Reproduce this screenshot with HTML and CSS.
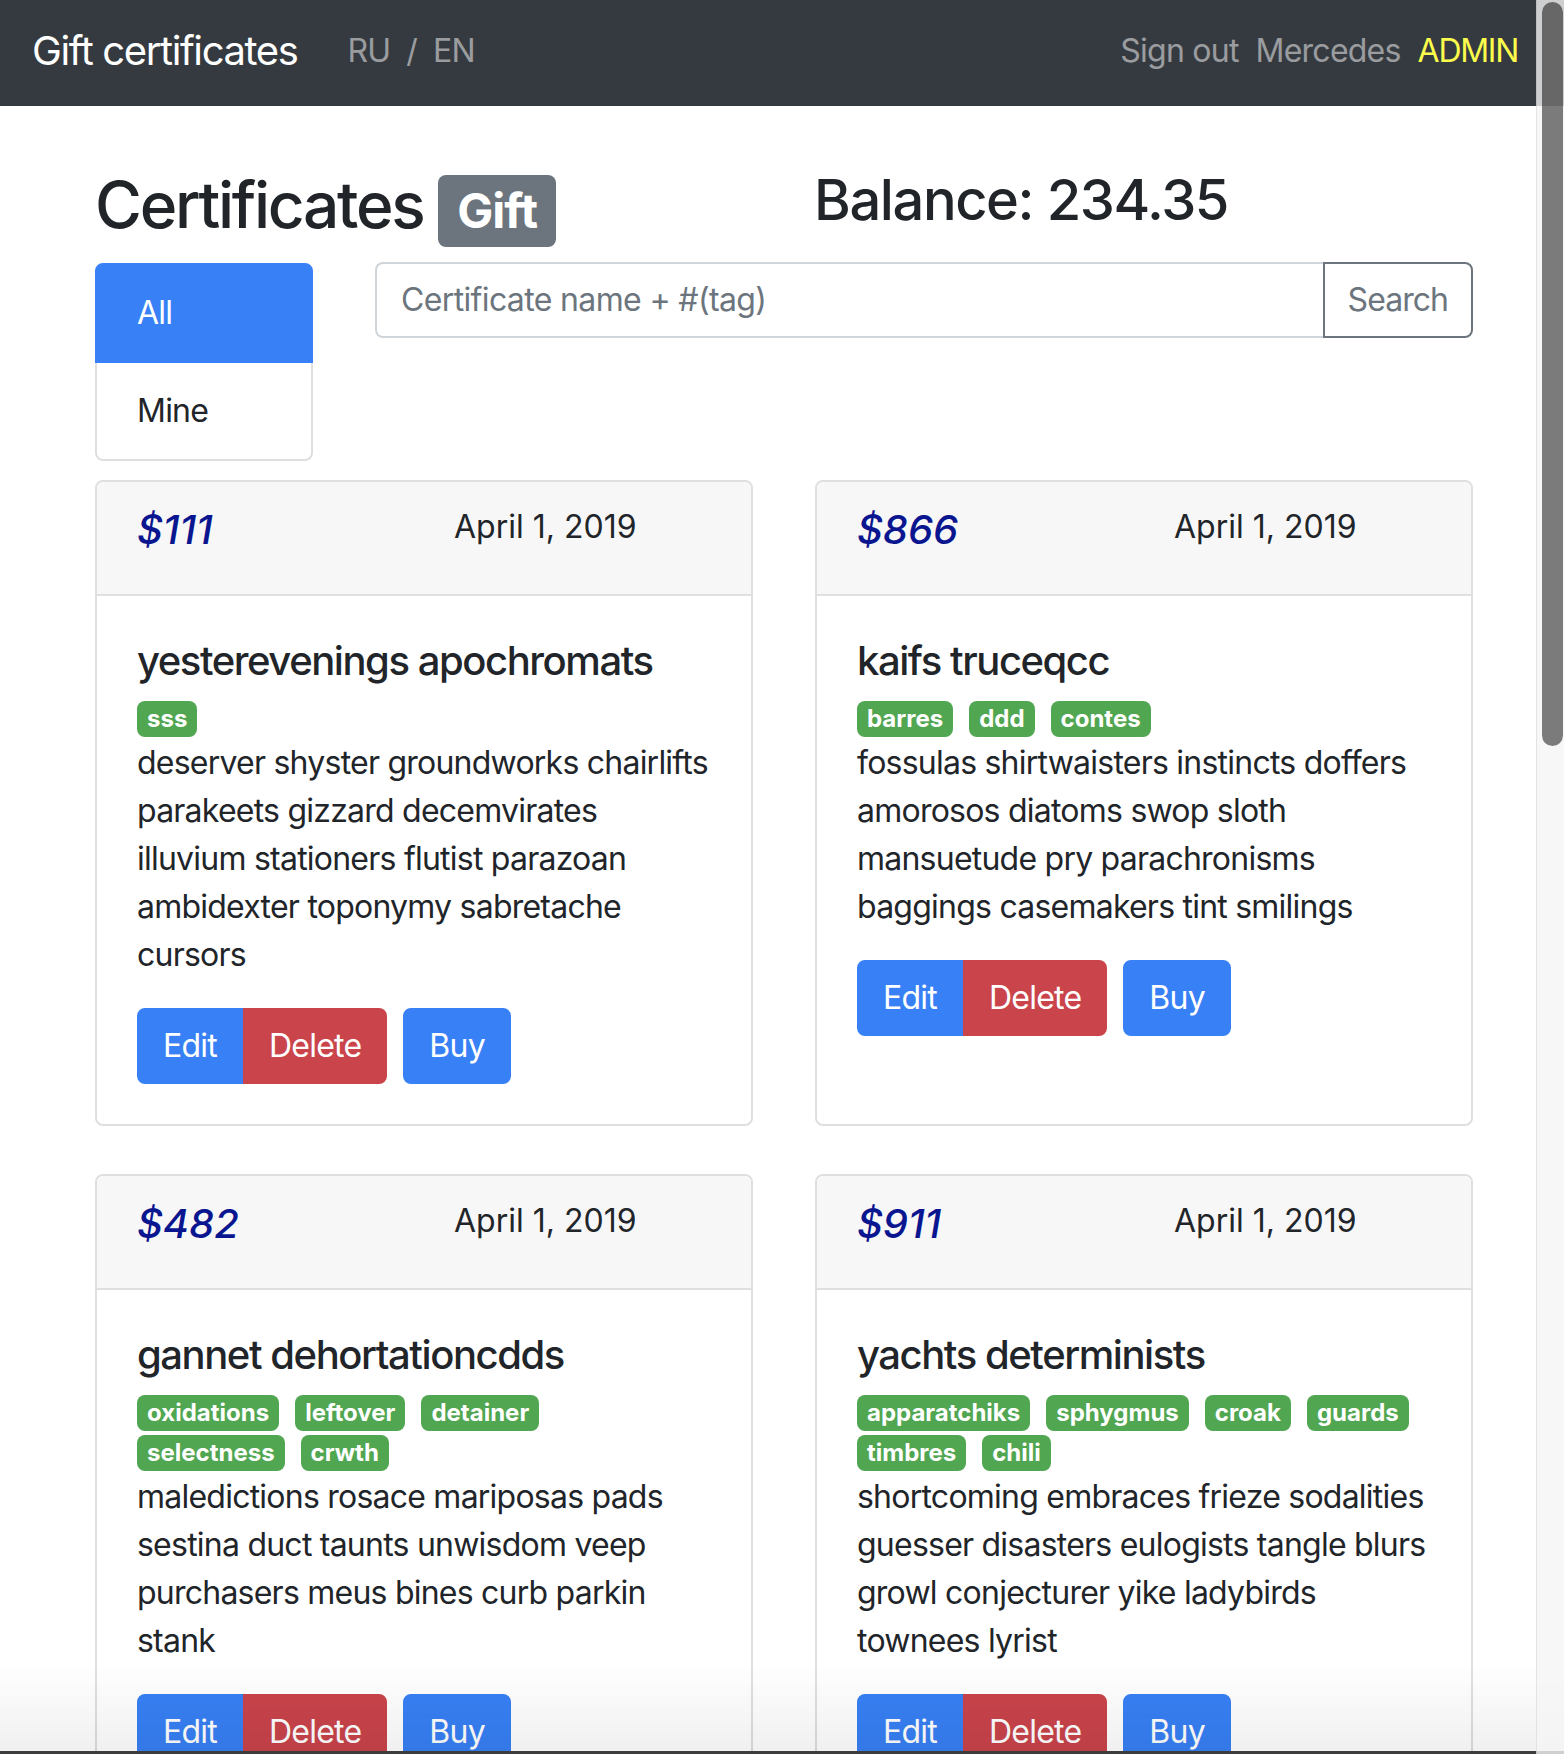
FILE: index.html
```html
<!DOCTYPE html>
<html lang="en">
<head>
<meta charset="utf-8">
<title>Gift certificates</title>
<link rel="stylesheet" href="styles.css">
</head>
<body>
<nav class="navbar">
  <a class="brand" href="#">Gift certificates</a>
  <div class="lang"><a href="#">RU</a><span class="sep">/</span><a href="#">EN</a></div>
  <div class="user">
    <a href="#">Sign out</a>
    <span>Mercedes</span>
    <span class="role">ADMIN</span>
  </div>
</nav>
<main class="container">
  <div class="head-row">
    <h2 class="page-title">Certificates <span class="badge-gift">Gift</span></h2>
    <h3 class="balance">Balance: 234.35</h3>
  </div>
  <div class="filter-row">
    <div class="list-group">
      <a class="list-item active" href="#">All</a>
      <a class="list-item" href="#">Mine</a>
    </div>
    <form class="search">
      <input class="search-input" type="text" placeholder="Certificate name + #(tag)">
      <button class="search-btn" type="button">Search</button>
    </form>
  </div>
  <div class="cards">
    <div class="card">
      <div class="card-header">
        <h5 class="price">$111</h5>
        <div class="date">April 1, 2019</div>
      </div>
      <div class="card-body">
        <h5 class="card-title">yesterevenings apochromats</h5>
        <div class="tags"><span class="tag">sss</span></div>
        <p class="desc">deserver shyster groundworks chairlifts<br>parakeets gizzard decemvirates<br>illuvium stationers flutist parazoan<br>ambidexter toponymy sabretache<br>cursors</p>
        <div class="actions">
          <div class="btn-group"><button class="btn btn-edit">Edit</button><button class="btn btn-delete">Delete</button></div>
          <button class="btn btn-buy">Buy</button>
        </div>
      </div>
    </div>
    <div class="card">
      <div class="card-header">
        <h5 class="price">$866</h5>
        <div class="date">April 1, 2019</div>
      </div>
      <div class="card-body">
        <h5 class="card-title">kaifs truceqcc</h5>
        <div class="tags"><span class="tag">barres</span><span class="tag">ddd</span><span class="tag">contes</span></div>
        <p class="desc">fossulas shirtwaisters instincts doffers<br>amorosos diatoms swop sloth<br>mansuetude pry parachronisms<br>baggings casemakers tint smilings</p>
        <div class="actions">
          <div class="btn-group"><button class="btn btn-edit">Edit</button><button class="btn btn-delete">Delete</button></div>
          <button class="btn btn-buy">Buy</button>
        </div>
      </div>
    </div>
    <div class="card">
      <div class="card-header">
        <h5 class="price">$482</h5>
        <div class="date">April 1, 2019</div>
      </div>
      <div class="card-body">
        <h5 class="card-title">gannet dehortationcdds</h5>
        <div class="tags"><span class="tag">oxidations</span><span class="tag">leftover</span><span class="tag">detainer</span><span class="tag">selectness</span><span class="tag">crwth</span></div>
        <p class="desc">maledictions rosace mariposas pads<br>sestina duct taunts unwisdom veep<br>purchasers meus bines curb parkin<br>stank</p>
        <div class="actions">
          <div class="btn-group"><button class="btn btn-edit">Edit</button><button class="btn btn-delete">Delete</button></div>
          <button class="btn btn-buy">Buy</button>
        </div>
      </div>
    </div>
    <div class="card">
      <div class="card-header">
        <h5 class="price">$911</h5>
        <div class="date">April 1, 2019</div>
      </div>
      <div class="card-body">
        <h5 class="card-title">yachts determinists</h5>
        <div class="tags"><span class="tag">apparatchiks</span><span class="tag">sphygmus</span><span class="tag">croak</span><span class="tag">guards</span><span class="tag">timbres</span><span class="tag">chili</span></div>
        <p class="desc">shortcoming embraces frieze sodalities<br>guesser disasters eulogists tangle blurs<br>growl conjecturer yike ladybirds<br>townees lyrist</p>
        <div class="actions">
          <div class="btn-group"><button class="btn btn-edit">Edit</button><button class="btn btn-delete">Delete</button></div>
          <button class="btn btn-buy">Buy</button>
        </div>
      </div>
    </div>
  </div>
</main>
<div class="bottom-fade"></div>
<div class="scroll-track"><div class="scroll-thumb"></div></div>
</body>
</html>
```

FILE: styles.css
```css
* { box-sizing: border-box; }
html { overflow: hidden; }
body {
  margin: 0;
  font-family: "Inter", "Noto Sans", sans-serif;
  font-size: 32px;
  line-height: 48px;
  letter-spacing: -0.024em;
  color: #212529;
  background: #fff;
}
a { text-decoration: none; }

.navbar {
  display: flex;
  align-items: center;
  height: 106px;
  padding: 0 46px 4px 32px;
  background: #353a40;
}
.brand { font-size: 40px; line-height: 60px; letter-spacing: -0.035em; color: #fff; }
.lang {
  display: flex;
  gap: 16px;
  margin-left: 50px;
  color: rgba(255,255,255,.5);
}
.lang a { color: rgba(255,255,255,.5); }
.user {
  display: flex;
  gap: 17px;
  margin-left: auto;
  color: rgba(255,255,255,.5);
}
.user a { color: rgba(255,255,255,.5); }
.user .role { color: #fcfc4c; letter-spacing: -0.04em; }

.container { width: 1378px; margin-left: 95px; }

.head-row {
  display: grid;
  grid-template-columns: 719px 1fr;
  align-items: start;
  padding-top: 61px;
}
.page-title {
  margin: 0 0 16px;
  font-size: 64px;
  font-weight: 500;
  line-height: 76.8px;
  letter-spacing: -0.036em;
}
.badge-gift {
  display: inline-block;
  font-size: 48px;
  font-weight: 700;
  line-height: 1;
  letter-spacing: -0.02em;
  padding: 12px 19px;
  border-radius: 8px;
  background: #6c757d;
  color: #fff;
}
.balance {
  margin: 0;
  font-size: 56px;
  font-weight: 500;
  line-height: 67.2px;
  letter-spacing: -0.025em;
}

.filter-row { display: flex; align-items: flex-start; }
.list-group { display: flex; flex-direction: column; width: 218px; }
.list-item {
  display: block;
  padding: 24px 40px;
  border: 2px solid #dfdfdf;
  color: #212529;
}
.list-item:first-child { border-radius: 8px 8px 0 0; }
.list-item:last-child { border-top: 0; border-radius: 0 0 8px 8px; }
.list-item.active { background: #3880f5; border-color: #3880f5; color: #fff; }

.search { display: flex; flex: 1; height: 76px; margin: -1px 0 0 62px; }
.search-input {
  flex: 1;
  min-width: 0;
  border: 2px solid #d0d5da;
  border-right: 0;
  border-radius: 8px 0 0 8px;
  padding: 0 24px;
  font: inherit;
  letter-spacing: -0.02em;
  color: #495057;
  outline: none;
}
.search-input::placeholder { color: #6c757d; }
.search-btn {
  border: 2px solid #6c757d;
  border-radius: 0 8px 8px 0;
  background: #fff;
  color: #6c757d;
  padding: 0 23px;
  font: inherit;
  letter-spacing: -0.03em;
}

.cards {
  display: grid;
  grid-template-columns: 658px 658px;
  column-gap: 62px;
  row-gap: 48px;
  margin-top: 19px;
}
.card {
  border: 2px solid #dfdfdf;
  border-radius: 8px;
  overflow: hidden;
  background: #fff;
}
.card-header {
  display: grid;
  grid-template-columns: 317px 1fr;
  padding: 24px 40px;
  background: #f7f7f7;
  border-bottom: 2px solid #dfdfdf;
}
.price {
  margin: 0 0 16px;
  font-size: 40px;
  font-style: italic;
  font-weight: 500;
  line-height: 48px;
  letter-spacing: 0;
  color: #0a1590;
}
.date { line-height: 48px; letter-spacing: 0; margin-top: -3px; }
.card-body { padding: 41px 40px 40px; }
.card-title {
  margin: 0 0 16px;
  font-size: 40px;
  font-weight: 500;
  line-height: 48px;
  letter-spacing: -0.036em;
}
.tags { display: flex; flex-wrap: wrap; row-gap: 4px; padding-bottom: 2px; }
.tag {
  margin-right: 16px;
  font-size: 24px;
  font-weight: 700;
  line-height: 1;
  letter-spacing: 0;
  padding: 6px 10px;
  border-radius: 8px;
  background: #51a651;
  color: #fff;
}
.desc { margin: 0 0 29px; white-space: nowrap; }
.actions { display: flex; gap: 16px; }
.btn-group { display: flex; }
.btn {
  font: inherit;
  letter-spacing: -0.024em;
  line-height: 48px;
  padding: 12px 24px;
  border: 2px solid transparent;
  border-radius: 8px;
  color: #fff;
}
.btn-edit { background: #3880f5; border-color: #3880f5; border-radius: 8px 0 0 8px; }
.btn-delete { background: #ca444b; border-color: #ca444b; border-radius: 0 8px 8px 0; }
.btn-buy { background: #3880f5; border-color: #3880f5; }

.bottom-fade {
  position: fixed;
  left: 0;
  right: 0;
  bottom: 0;
  height: 90px;
  background: linear-gradient(to bottom, rgba(0,0,0,0), rgba(0,0,0,.06));
  border-bottom: 3px solid #3c3c3c;
  pointer-events: none;
}
.scroll-track {
  position: fixed;
  top: 0;
  right: 0;
  bottom: 0;
  width: 28px;
  background: rgba(245,245,245,.8);
  border-left: 1px solid rgba(0,0,0,.08);
}
.scroll-thumb {
  margin: 2px 1px 0 5px;
  height: 744px;
  border-radius: 11px;
  background: rgba(0,0,0,.5);
}
```
